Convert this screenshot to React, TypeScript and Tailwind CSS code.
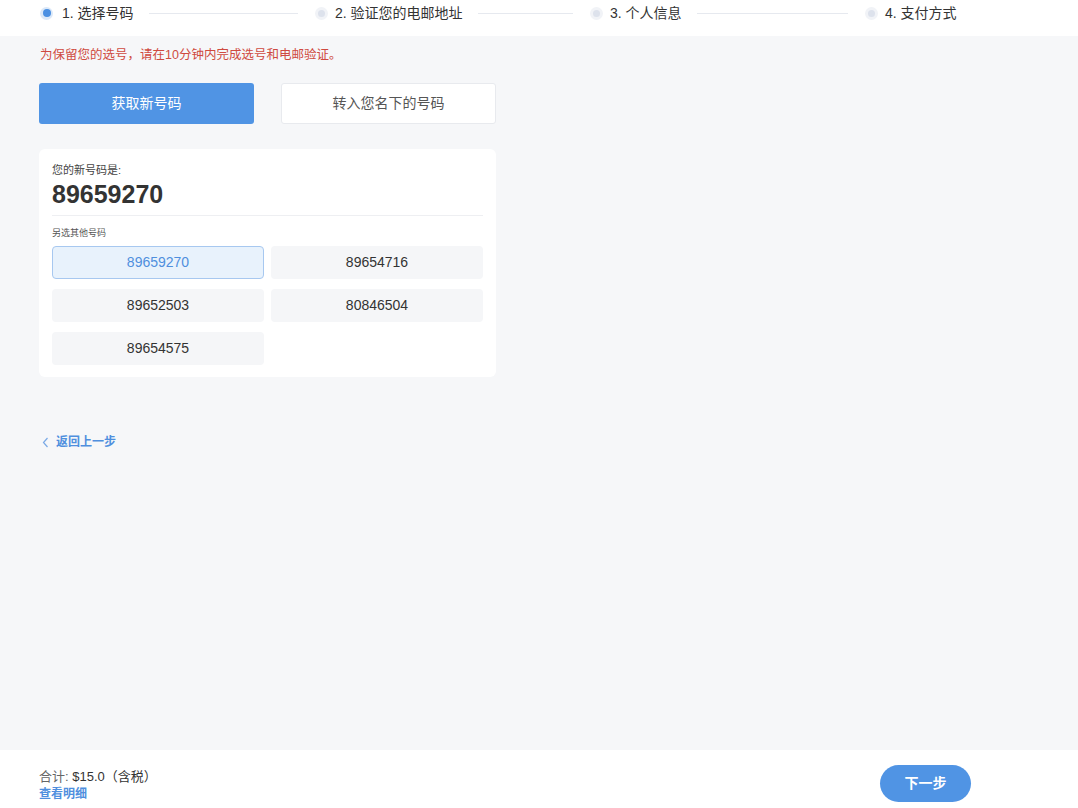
import React, { useState } from "react";

const STEPS = ["1. 选择号码", "2. 验证您的电邮地址", "3. 个人信息", "4. 支付方式"];
const NUMBERS = ["89659270", "89654716", "89652503", "80846504", "89654575"];

function StepDot({ active }: { active: boolean }) {
  return (
    <span
      className={`flex h-[13px] w-[13px] shrink-0 items-center justify-center rounded-full ${
        active ? "bg-[#dbe8f8]" : "bg-[#f1f3f7]"
      }`}
    >
      <span
        className={`block rounded-full ${
          active ? "h-[8px] w-[8px] bg-[#4a8fe2]" : "h-[7px] w-[7px] bg-[#dde2ec]"
        }`}
      />
    </span>
  );
}

export default function App() {
  const [picked, setPicked] = useState(0);

  return (
    <div
      className="flex min-h-screen flex-col bg-[#f6f7f9] text-[#333]"
      style={{ fontFamily: '"Liberation Sans", "Noto Sans CJK SC", sans-serif' }}
    >
      {/* 步骤条 */}
      <div className="h-[36px] bg-white pl-[40px]">
        <div className="flex h-[26px] items-center">
          {STEPS.map((s, i) => (
            <div
              key={s}
              className={`flex items-center ${i < 3 ? "w-[275px]" : ""}`}
            >
              <StepDot active={i === 0} />
              <span
                className={`whitespace-nowrap text-[14px] leading-none text-[#333] ${
                  i === 0 ? "ml-[9px]" : "ml-[7px]"
                }`}
              >
                {s}
              </span>
              {i < 3 && (
                <span className="ml-[15px] mr-[17px] h-px flex-1 bg-[#e6e9ef]" />
              )}
            </div>
          ))}
        </div>
      </div>

      <main className="flex-1 px-[39px]">
        <p className="mt-[11px] pl-px text-[12.5px] leading-4 text-[#cf4a40]">
          为保留您的选号，请在10分钟内完成选号和电邮验证。
        </p>

        <div className="mt-[20px] flex gap-[27px]">
          <button className="h-[41px] w-[215px] rounded-[3px] bg-[#5094e4] text-[14px] text-white">
            获取新号码
          </button>
          <button className="h-[41px] w-[215px] rounded-[3px] border border-[#e8eaee] bg-white text-[14px] text-[#555]">
            转入您名下的号码
          </button>
        </div>

        <div className="mt-[25px] w-[457px] rounded-[6px] bg-white px-[13px] pb-[12px] pt-[13px]">
          <div className="text-[11px] leading-4 text-[#444]">您的新号码是:</div>
          <div className="mt-[1px] text-[25px] font-bold leading-[30px] text-[#333]">
            {NUMBERS[picked]}
          </div>
          <div className="mt-[6px] h-px bg-[#eeeff2]" />
          <div className="mt-[11px] text-[9px] leading-3 text-[#555]">另选其他号码</div>
          <div className="mt-[7px] grid grid-cols-2 gap-x-[7px] gap-y-[10px]">
            {NUMBERS.map((n, i) => (
              <button
                key={n}
                onClick={() => setPicked(i)}
                className={`h-[33px] rounded-[4px] border text-[14px] ${
                  i === picked
                    ? "border-[#a7c8f0] bg-[#e8f2fc] text-[#4f8fde]"
                    : "border-transparent bg-[#f5f6f8] text-[#333]"
                }`}
              >
                {n}
              </button>
            ))}
          </div>
        </div>

        <a className="mt-[57px] ml-[3px] flex items-center gap-[7px] text-[12px] font-bold leading-4 text-[#4f8fde]">
          <svg width="7" height="11" viewBox="0 0 7 11" fill="none">
            <path d="M5.5 1L1.5 5.5L5.5 10" stroke="#7aa9e6" strokeWidth="1.2" />
          </svg>
          返回上一步
        </a>
      </main>

      <footer className="flex h-[58px] items-start justify-between bg-white pl-[39px] pr-[107px] pt-[15px]">
        <div className="pt-[3px]">
          <div className="text-[13px] leading-[18px] text-[#333]">
            <span className="text-[#666]">合计:</span> $15.0（含税）
          </div>
          <div className="text-[12px] font-bold leading-4 text-[#4f8fde]">查看明细</div>
        </div>
        <button className="h-[37px] w-[91px] rounded-full bg-[#5094e4] text-[14px] font-bold text-white">
          下一步
        </button>
      </footer>
    </div>
  );
}
